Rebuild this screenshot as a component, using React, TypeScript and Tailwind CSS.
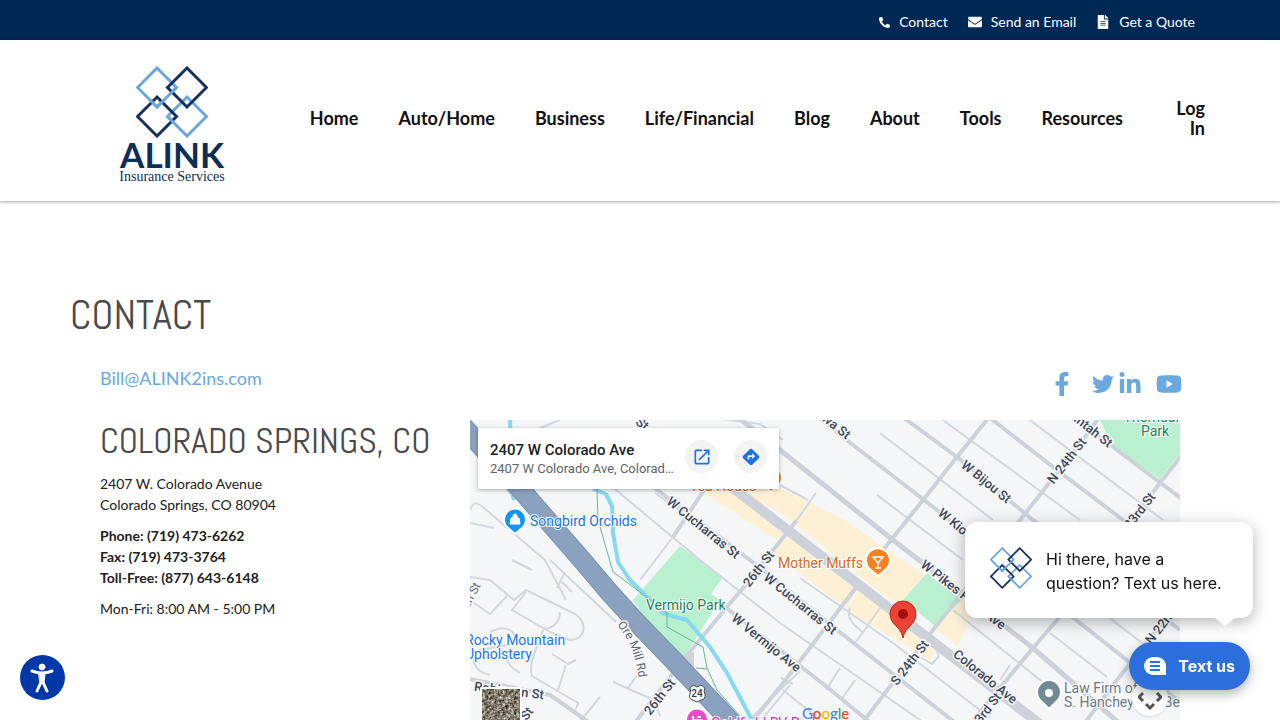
import React from 'react';
import { FaPhoneAlt, FaEnvelope, FaFileAlt, FaFacebookF, FaTwitter, FaLinkedinIn, FaYoutube } from 'react-icons/fa';
import { MdOpenInNew, MdDirections } from 'react-icons/md';

const topLinks = [
  { label: 'Contact', icon: FaPhoneAlt, size: 11 },
  { label: 'Send an Email', icon: FaEnvelope, size: 14 },
  { label: 'Get a Quote', icon: FaFileAlt, size: 14 },
];

const navLinks = ['Home', 'Auto/Home', 'Business', 'Life/Financial', 'Blog', 'About', 'Tools', 'Resources'];

interface DiamondsProps {
  className: string;
  strokeWidth: number;
}

const Diamonds: React.FC<DiamondsProps> = ({ className, strokeWidth }) => (
  <svg viewBox="0 0 72 72" className={className} fill="none" strokeWidth={strokeWidth} aria-hidden="true">
    <path d="M21 2 40.500 21.500 21 41 1.500 21.500Z" stroke="#6aa6dc" />
    <path d="M51 31 70.500 50.500 51 70 31.500 50.500Z" stroke="#6aa6dc" />
    <path d="M51 2 70.500 21.500 51 41 31.500 21.500Z" stroke="#16305c" />
    <path d="M21 31 40.500 50.500 21 70 1.500 50.500Z" stroke="#16305c" />
    <path d="M40.500 21.500 34 28M31.500 50.500 38 57M14 34 21 41 28 34" stroke="#6aa6dc" />
  </svg>
);

const Logo = () => (
  <a href="#" aria-label="ALINK Insurance Services" className="flex w-[110px] shrink-0 flex-col items-center text-[#0d2f57]">
    <Diamonds className="h-[72px] w-[72px]" strokeWidth={3} />
    <span className="mt-0.5 font-['Lato'] text-[35px] leading-7 font-bold">ALINK</span>
    <span className="mt-0.5 font-['Liberation_Serif'] text-sm leading-[14px] whitespace-nowrap">Insurance Services</span>
  </a>
);

const mainRoads = [
  { d: 'M690 380 780 450 893 540 1033 648 1120 724', w: 5 },
  { d: 'M690 455 1040 724', w: 10 },
];

const midRoads = [
  'M800 402 853 445 937 510 1190 710',
  'M900 415 957 457 1033 520 1180 630',
  'M985 414 1057 470 1123 520 1180 562',
  'M1070 415 1113 447 1190 505',
  'M990 416 957 457 923 500 880 554',
  'M858 585 780 687 750 724',
  'M1100 416 1083 440 1020 520 933 630 863 722',
  'M1184 452 1160 483 1057 620 1033 648 970 724',
  'M1180 600 1117 680 1084 724',
  'M797 520 747 583 683 660 634 724',
  'M600 447 668 498 763 570 837 630 957 724',
  'M725 607 827 687 872 724',
  'M712 478 673 537',
  'M450 675 550 695 600 730',
];

const minorRoads = [
  'M880 433 993 520', 'M940 418 1080 520', 'M1027 418 1163 520', 'M877 495 963 560', 'M780 485 808 500M816 493 797 520',
  'M673 537 640 580', 'M655 493 750 560M800 578 893 643 990 718', 'M580 460 670 535 700 560 780 623 923 722',
  'M953 610 1060 696M1050 633 1107 677M1060 580 1180 672', 'M1010 665 1000 680M1090 700 1120 722',
  'M850 608C845 622 860 628 862 632M880 608 856 642M920 657 932 664 939 656 934 645',
  'M840 668 826 690M855 680 841 700M783 690 825 724', 'M800 671 780 690M790 685 760 722',
  'M470 443 515 500M470 420 500 452 530 432', 'M470 510C474 500 478 503 484 508L545 560 566 600M470 523 494 528',
  'M512 560 532 570M550 560 616 622M565 572 557 588M562 582 572 592', 'M470 577 490 580 514 600 526 590 575 614C588 622 586 640 570 640L550 632 512 610 526 592',
  'M470 600 490 614 507 596M560 612C560 624 550 630 543 628', 'M490 632C510 622 520 636 512 644L480 650C468 656 474 672 490 675',
  'M543 630C536 650 528 664 532 676L578 703 574 714M552 654 568 664 576 660M566 665 558 690', 'M506 652C506 664 512 668 520 673',
  'M613 682 654 700 660 716M638 674 628 688M600 697 578 724', 'M530 432 560 420M545 428 560 440', 'M783 440 760 424 700 416', 'M780 690 745 724M793 684 781 678',
];

interface MapLabel {
  text: string;
  x: number;
  y: number;
  angle: number;
}

const streetLabels: MapLabel[] = [
  { text: 'W Cucharras St', x: 703, y: 528, angle: 39 },
  { text: 'W Cucharras St', x: 800, y: 604, angle: 39 },
  { text: '26th St', x: 759, y: 569, angle: -52 },
  { text: 'W Vermijo Ave', x: 766, y: 643, angle: 39 },
  { text: '26th St', x: 660, y: 697, angle: -52 },
  { text: 'S 24th St', x: 910, y: 663, angle: -52 },
  { text: 'Colorado Ave', x: 985, y: 677, angle: 39 },
  { text: 'N 23rd St', x: 982, y: 716, angle: -52 },
  { text: 'W Pikes Peak Ave', x: 963, y: 595, angle: 38 },
  { text: 'W Kiowa St', x: 965, y: 532, angle: 39 },
  { text: 'W Kiowa St', x: 823, y: 416, angle: 39 },
  { text: 'W Bijou St', x: 986, y: 482, angle: 39 },
  { text: 'N 24th St', x: 1067, y: 461, angle: -52 },
  { text: 'W Uintah St', x: 1084, y: 424, angle: 38 },
  { text: 'N 23rd St', x: 1136, y: 516, angle: -52 },
  { text: 'N 22nd St', x: 1166, y: 620, angle: -52 },
  { text: 'Robinson St', x: 509, y: 691, angle: 7 },
  { text: 'St', x: 527, y: 714, angle: -52 },
  { text: 'St', x: 642, y: 424, angle: 38 },
];

const AreaMap = () => (
  <svg
    viewBox="470 420 710 300"
    preserveAspectRatio="xMinYMin slice"
    className="block h-full w-full font-['Roboto']"
    role="img"
    aria-label="Map of 2407 W Colorado Ave"
  >
    <rect x="470" y="420" width="900" height="400" fill="#f5f6f7" />

    {/* commercial blocks */}
    <g fill="#fdf0d5">
      <path d="M720 482 780 488 845 520 905 562 925 575 900 606 880 592 780 512Z" />
      <path d="M703 492 738 488 789 526 776 540Z" />
      <path d="M770 550 790 535 838 570 858 587 847 608 775 556Z" />
      <path d="M860 587 937 645 930 660 847 610Z" />
      <path d="M963 595 975 606 958 646 935 628Z" />
    </g>

    {/* parks */}
    <g fill="#b9f0cf">
      <path d="M680 546 723 577 711 594 720 600 684 657 672 656 633 600Z" />
      <path d="M927 573 962 600 935 626 903 600Z" />
      <path d="M1100 420H1180V453L1160 479 1113 447Z" />
    </g>

    <g fill="none" stroke="#d3d7de" strokeLinejoin="round">
      {minorRoads.map(d => (
        <path key={d} d={d} strokeWidth="2" />
      ))}
      <g stroke="#cdd2da">
        {midRoads.map(d => (
          <path key={d} d={d} strokeWidth="4" />
        ))}
        {mainRoads.map(road => (
          <path key={road.d} d={road.d} strokeWidth={road.w} />
        ))}
      </g>
    </g>

    <path d="M666 660 694 652 694 672 676 680Z" fill="#cdd2da" />

    {/* creek and trail */}
    <g fill="none" strokeLinejoin="round">
      <path d="M510 418 512 490 514 500M593 489 606 494 612 506 613 533 618 562 630 580 663 613 675 617 687 620 710 647 727 673 753 722" stroke="#86d9ee" strokeWidth="4" />
      <path d="M597 489 598 520 613 572 628 583 667 613 667 627 703 647 707 668 717 690 740 716M696 668 707 669" stroke="#65b990" strokeWidth="1" />
    </g>

    {/* US 24 */}
    <path d="M458 421 522 491 582 560 609 592 640 626 673 660 722 712 740 732" fill="none" stroke="#788fb0" strokeWidth="20" />
    <path d="M458 421 522 491 582 560 609 592 640 626 673 660 722 712 740 732" fill="none" stroke="#8ba1c0" strokeWidth="18" />

    <g fill="#3e4758" stroke="#f5f6f7" strokeWidth="3" paintOrder="stroke" fontSize="13" fontWeight="500" textAnchor="middle">
      {streetLabels.map(label => (
        <text key={`${label.text}-${label.x}`} transform={`translate(${label.x} ${label.y}) rotate(${label.angle})`} dy="4">
          {label.text}
        </text>
      ))}
      <path id="ore-mill" d="M617 625Q636 646 639 682" fill="none" stroke="none" />
      <text fontSize="12" fontWeight="400" fill="#5f6772" textAnchor="start">
        <textPath href="#ore-mill">Ore Mill Rd</textPath>
      </text>
      <text transform="translate(472 602) rotate(-62)" fontSize="12" fontWeight="400" fill="#5f6772">27th St</text>
    </g>

    {/* place names */}
    <g fontSize="14" stroke="#fff" strokeWidth="2" paintOrder="stroke">
      <text x="530" y="526" fill="#1a73d8">Songbird Orchids</text>
      <text x="465" y="645" fill="#1a73e8">Rocky Mountain</text>
      <text x="465" y="659" fill="#1a73e8">Upholstery</text>
      <text x="646" y="610" fill="#188055">Vermijo Park</text>
      <text x="1155" y="422" fill="#188055" textAnchor="middle">Thorndale</text>
      <text x="1155" y="436" fill="#188055" textAnchor="middle">Park</text>
      <text x="778" y="568" fill="#d46a1a">Mother Muffs</text>
      <text x="690" y="491" fill="#d46a1a">Tea House</text>
      <text x="711" y="728" fill="#c92fb4">Goldfield RV Park</text>
      <text x="1064" y="693" fill="#6b7580">Law Firm of</text>
      <text x="1064" y="707" fill="#6b7580">S. Hanchey</text>
      <text x="1180" y="707" fill="#6b7580" textAnchor="end">Be</text>
    </g>

    {/* pins */}
    <g stroke="#fff" strokeWidth="2">
      <path d="M515 534 508 528A11 11 0 1 1 522 528Z" fill="#1396f3" />
      <path d="M878 576 871 570A12 12 0 1 1 885 570Z" fill="#f58220" />
      <path d="M771 492 764 486A11 11 0 1 1 778 486Z" fill="#f58220" />
      <path d="M1049 709 1041 701A12 12 0 1 1 1057 701Z" fill="#708b94" />
      <path d="M697 734 690 728A11 11 0 1 1 704 728Z" fill="#f24acb" />
    </g>
    <path d="M511 518H519L520 524H510ZM513 518V516A2 2 0 0 1 517 516V518" fill="#fff" stroke="#fff" />
    <path d="M873 557H883L878 563ZM878 562V568M875 568H881" fill="none" stroke="#fff" strokeWidth="1.500" />
    <circle cx="1049" cy="693" r="4" fill="#fff" />
    <path d="M693 716V724M693 720H702V724M697 717H701" stroke="#fff" strokeWidth="2" />

    <path d="M903 638C901 626 890 625 890 614A13 13 0 0 1 916 614C916 625 905 626 903 638Z" fill="#ea4335" stroke="#c5221f" strokeWidth="1" />
    <circle cx="903" cy="614" r="5" fill="#a50e0e" />

    <path d="M690 688 693 685 697 687 701 685 705 688Q703 691 705 694 706 699 701 700L697 702 693 700Q688 699 690 694 691 691 690 688Z" fill="#fff" stroke="#4a4f58" />
    <text x="697" y="697" fontSize="10" fontWeight="500" fill="#333b47" textAnchor="middle">24</text>

    <text x="802" y="719" fontSize="15" fontWeight="500" fontFamily="Lato, sans-serif">
      <tspan fill="#4285f4">G</tspan>
      <tspan fill="#ea4335">o</tspan>
      <tspan fill="#fbbc04">o</tspan>
      <tspan fill="#4285f4">g</tspan>
      <tspan fill="#34a853">l</tspan>
      <tspan fill="#ea4335">e</tspan>
    </text>

    {/* satellite thumbnail */}
    <filter id="terrain" x="0" y="0" width="1" height="1" colorInterpolationFilters="sRGB">
      <feTurbulence type="fractalNoise" baseFrequency="0.35" numOctaves="3" seed="4" />
      <feColorMatrix values="1.2 0 0 0 -0.1 1.2 0 0 0 -0.12 1.2 0 0 0 -0.18 0 0 0 0 1" />
    </filter>
    <rect x="480" y="687" width="42" height="42" rx="2" fill="#fff" />
    <rect x="482" y="689" width="38" height="38" filter="url(#terrain)" />
  </svg>
);

const App = () => (
  <div className="bg-white font-['Lato',sans-serif] text-[#212121]">
    <div className="flex h-10 items-center justify-end gap-5 bg-[#002855] px-[85px] pt-1">
      {topLinks.map(({ label, icon: Icon, size }) => (
        <a key={label} href="#" className="flex items-center gap-[9px] text-sm text-white">
          <Icon size={size} />
          {label}
        </a>
      ))}
    </div>

    <header className="flex items-start justify-between px-[75px] pt-[26px] pb-[17px] shadow-[0_1px_3px_rgba(0,0,0,0.35)]">
      <div className="pl-[42px]">
        <Logo />
      </div>
      <nav className="mt-8 flex items-center gap-10 text-lg leading-5 font-bold text-[#111]">
        {navLinks.map(link => (
          <a key={link} href="#">{link}</a>
        ))}
        <a href="#" className="w-[42px] text-right">Log In</a>
      </nav>
    </header>

    <main className="px-[70px] pt-[88px]">
      <h1 className="font-['Abel','Open_Sans_Condensed_Light','Open_Sans_Condensed','Liberation_Sans_Narrow',sans-serif] text-[41px] leading-[52px] text-[#4a4a4a]">CONTACT</h1>

      <div className="mt-[23px] flex items-start justify-between pr-7 pl-[30px]">
        <a href="mailto:Bill@ALINK2ins.com" className="text-lg leading-7 text-[#6aa9e0]">Bill@ALINK2ins.com</a>
        <div className="flex items-center gap-1 pt-[7px] text-[#6aa9e0]">
          <a href="#" aria-label="Facebook" className="mr-[14px]"><FaFacebookF size={24} /></a>
          <a href="#" aria-label="Twitter"><FaTwitter size={22} /></a>
          <a href="#" aria-label="LinkedIn" className="mr-[10px]"><FaLinkedinIn size={24} /></a>
          <a href="#" aria-label="YouTube"><FaYoutube size={26} /></a>
        </div>
      </div>

      <div className="mx-[30px] mt-[23px] flex">
        <section className="w-[370px] shrink-0 text-sm leading-[21px]">
          <h2 className="mb-[11px] font-['Abel','Open_Sans_Condensed_Light','Open_Sans_Condensed','Liberation_Sans_Narrow',sans-serif] text-[36px] leading-[42px] whitespace-nowrap text-[#4a4a4a]">COLORADO SPRINGS, CO</h2>
          <p className="mb-[10px]">
            2407 W. Colorado Avenue
            <br />
            Colorado Springs, CO 80904
          </p>
          <p className="mb-[10px] font-bold">
            Phone: (719) 473-6262
            <br />
            Fax: (719) 473-3764
            <br />
            Toll-Free: (877) 643-6148
          </p>
          <p>Mon-Fri: 8:00 AM - 5:00 PM</p>
        </section>

        <section className="relative h-[300px] min-w-0 flex-1 overflow-hidden">
          <AreaMap />
          <div className="absolute top-2 left-2 flex w-[301px] items-start bg-white p-3 shadow-[0_1px_4px_rgba(0,0,0,0.3)]">
            <div className="w-[186px] font-['Roboto']">
              <div className="text-[15px] leading-5 font-medium text-[#202124]">2407 W Colorado Ave</div>
              <div className="truncate text-[13px] leading-[17px] text-[#5f6368]">2407 W Colorado Ave, Colorado Springs, CO 80904</div>
            </div>
            <div className="ml-auto flex gap-4 text-[#1a73e8]">
              <a href="#" aria-label="Open in Maps" className="flex size-[33px] items-center justify-center rounded-full bg-[#f3f3f4]"><MdOpenInNew size={20} /></a>
              <a href="#" aria-label="Directions" className="flex size-[33px] items-center justify-center rounded-full bg-[#f3f3f4]"><MdDirections size={20} /></a>
            </div>
          </div>
          <button aria-label="Map camera controls" className="absolute right-3 bottom-1 flex size-9 items-center justify-center rounded-full bg-white shadow">
            <svg viewBox="0 0 24 24" className="size-6" fill="none" stroke="#555" strokeWidth="3">
              <path d="M5 7 1 11 5 15M19 7 23 11 19 15M8 18 12 22 16 18" />
            </svg>
          </button>
        </section>
      </div>
    </main>

    <button aria-label="Accessibility options" className="fixed bottom-5 left-5 size-[45px] rounded-full bg-[#0038a8]">
      <svg viewBox="0 0 45 45" fill="#fff" stroke="#fff" strokeLinecap="round" strokeLinejoin="round">
        <circle cx="22" cy="12" r="3" />
        <path d="M12 16Q22 20 32 16M22 19V25L17 36M22 25 27 36" fill="none" strokeWidth="3" />
        <path d="M19 19H25L24 27H20Z" />
      </svg>
    </button>

    <div className="fixed right-[27px] bottom-[30px] flex flex-col items-end gap-6 font-['Inter',sans-serif]">
      <div className="relative flex w-[288px] items-start gap-[14px] rounded-xl bg-white px-[25px] pt-[25px] pb-[23px] text-base leading-6 text-[#111] shadow-[0_4px_16px_rgba(0,0,0,0.3)]">
        <Diamonds className="size-[42px] shrink-0" strokeWidth={3} />
        <p className="whitespace-nowrap">
          Hi there, have a
          <br />
          question? Text us here.
        </p>
        <span className="absolute right-[18px] -bottom-2 border-x-10 border-t-8 border-x-transparent border-t-white" />
      </div>
      <button className="mr-[3px] flex h-12 items-center gap-3 rounded-full bg-[#2c6fdc] px-[15px] text-base font-bold text-white shadow-[0_4px_12px_rgba(0,0,0,0.3)]">
        <svg viewBox="0 0 22 18" className="h-[18px] w-[22px]">
          <path d="M9 0H13A9 9 0 0 1 22 9V18H9A9 9 0 0 1 9 0Z" fill="#fff" />
          <path d="M6 5H16M6 9H16M6 13H16" stroke="#2c6fdc" strokeWidth="2" />
        </svg>
        Text us
      </button>
    </div>
  </div>
);

export default App;
